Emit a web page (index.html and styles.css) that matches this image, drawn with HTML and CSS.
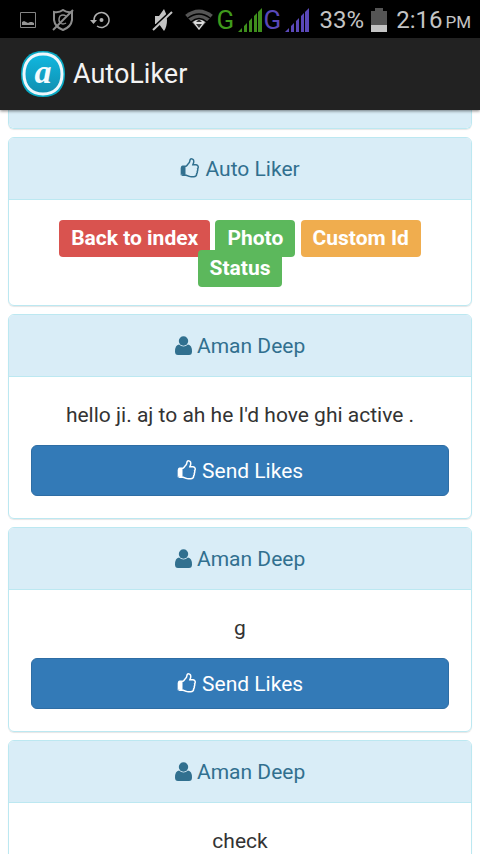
FILE: index.html
```html
<!DOCTYPE html>
<html lang="en">
<head>
<meta charset="utf-8">
<meta name="viewport" content="width=device-width, initial-scale=1">
<title>AutoLiker</title>
<link rel="stylesheet" href="styles.css">
</head>
<body>
<svg class="defs" aria-hidden="true">
  <symbol id="thumb" viewBox="64 0 1664 1792"><path d="M256 1408q0-26-19-45t-45-19-45 19-19 45 19 45 45 19 45-19 19-45zm1280-640q0-51-39-89.500t-89-38.500h-352q0-58 48-159.500t48-160.500q0-98-32-145t-128-47q-26 26-38 85t-30.500 125.500-59.500 109.500q-22 23-77 91-4 5-23 30t-31.500 41-34.500 42.500-40 44-38.500 35.500-40 27-35.500 9h-32v640h32q13 0 31.500 3t33 6.500 38 11 35 11.500 35.500 12.500 29 10.500q211 73 342 73h121q192 0 192-167 0-26-5-56 30-16 47.500-52.500t17.500-73.500-18-69q53-50 53-119 0-25-10-55.500t-25-47.500q32-1 53.500-47t21.500-81zm128-1q0 89-49 163 9 33 9 69 0 77-38 144 3 21 3 43 0 101-60 178 1 139-85 219.500t-227 80.500h-129q-96 0-189.500-22.500t-216.500-65.500q-116-40-138-40h-288q-53 0-90.500-37.500t-37.500-90.500v-640q0-53 37.500-90.500t90.500-37.500h274q36-24 137-155 58-75 107-128 24-25 35.500-85.500t30.500-126.500 62-108q39-37 90-37 84 0 151 32.500t102 101.500 35 186q0 93-48 192h176q104 0 180 76t76 179z"/><path d="M90 800H310V1480H90Z" fill-opacity=".75"/></symbol>
  <symbol id="user" viewBox="0 0 17 21"><circle cx="8.500" cy="6" r="4.700"/><path d="M4 9.500Q8.500 13.500 13 9.500Q17 10 17 16.500Q17 20 14 20H3Q0 20 0 16.500Q0 10 4 9.500Z"/></symbol>
  <symbol id="signal" viewBox="0 0 24 24"><path d="M0 24L4 20V24ZM6 18L9 15V24H6ZM11 13L14 10V24H11ZM16 8L19 5V24H16ZM20 4L24 0V24H20Z"/></symbol>
</svg>
<div class="app">
  <div class="status">
    <div class="notices">
      <svg width="16" height="16" viewBox="0 0 16 16"><path d="M.5.500H15.500V15.500H.5Z" fill="none" stroke="#858585"/><path d="M2 13V10L4 9L6 10L8 11L10 10L12 10L14 11V13Z" fill="#959595"/></svg>
      <svg width="22" height="22" viewBox="0 0 22 22" fill="none" stroke="#8c8c8c" stroke-width="2"><path d="M2 3Q7 4 11 1Q15 4 20 3V11Q19 18 11 21Q3 18 2 11Z"/><path d="M14 7Q11 5 8 7Q6 11 8 14Q11 16 14 14" stroke-width="1.500"/><path d="M1 21L21 1"/></svg>
      <svg width="20" height="18" viewBox="0 0 20 18" fill="none" stroke="#b0b0b0" stroke-width="1.500"><path d="M4 11V9A7.500 7.500 0 1 1 7 15"/><path d="M0 9H7L3.500 13Z" fill="#b0b0b0" stroke="none"/><circle cx="11.500" cy="9" r="2" fill="#b0b0b0" stroke="none"/></svg>
    </div>
    <div class="system">
      <svg class="mute" width="22" height="24" viewBox="0 0 22 24"><path d="M3 8H7L12 1Q15 6 15 12Q15 19 12 23L7 16H3Z" fill="#c4c4c4"/><path d="M0 21L20 2" stroke="#000" stroke-width="2"/><path d="M1 22L20 4" stroke="#c4c4c4" stroke-width="2"/></svg>
      <svg class="wifi" width="28" height="22" viewBox="0 0 28 22" fill="none"><path d="M0 6Q14-5 28 6L14 21Z" fill="#555"/><path d="M3 9Q14 1 25 9M6 13Q14 6 22 13" stroke="#000" stroke-width="1.500"/><path d="M8 13Q14 8 20 13L14 21Z" fill="#ddd"/><path d="M11 13L14 10L17 13ZM11 15H17L14 19Z" fill="#333"/><path d="M0 6L14 22H0ZM28 6L14 22H28Z" fill="#000"/></svg>
      <span class="net green">G</span><svg class="bars green" width="24" height="24"><use href="#signal"/></svg>
      <span class="net violet">G</span><svg class="bars violet" width="24" height="24"><use href="#signal"/></svg>
      <span class="percent">33%</span>
      <svg class="battery" width="16" height="24" viewBox="0 0 16 24"><path d="M4 0H12V3H16V24H0V3H4Z" fill="#555"/><path d="M0 17H16V24H0Z" fill="#c4c4c4"/></svg>
      <span class="time">2:16</span><span class="ampm">PM</span>
    </div>
  </div>
  <header class="bar">
    <svg class="logo" width="46" height="48" viewBox="0 0 46 48">
      <defs><linearGradient id="cyan" x2="0" y2="1"><stop stop-color="#10b8e0"/><stop offset="1" stop-color="#118eaf"/></linearGradient></defs>
      <path d="M23 1C37 1 45 9 45 24S37 47 23 47S1 39 1 24S9 1 23 1Z" fill="#08a9c4"/>
      <path d="M23 4C35 4 42 12 42 24S35 44 23 44S4 36 4 24S11 4 23 4Z" fill="url(#cyan)" stroke="#eef7fc" stroke-width="3"/>
      <text x="23" y="33" text-anchor="middle" class="mark">a</text>
    </svg>
    <h1>AutoLiker</h1>
  </header>
  <main>
    <section class="panel cut"><div class="tail"></div></section>
    <section class="panel">
      <h2><svg class="thumb"><use href="#thumb"/></svg> Auto Liker</h2>
      <nav class="content">
        <a class="label red" href="#index">Back to index</a>
        <a class="label leaf" href="#photo">Photo</a>
        <a class="label amber" href="#custom">Custom Id</a>
        <a class="label leaf" href="#status">Status</a>
      </nav>
    </section>
    <section class="panel">
      <h2><svg class="user"><use href="#user"/></svg> Aman Deep</h2>
      <div class="content">
        <p>hello ji. aj to ah he I'd hove ghi active .</p>
        <button type="button"><svg class="thumb"><use href="#thumb"/></svg> Send Likes</button>
      </div>
    </section>
    <section class="panel">
      <h2><svg class="user"><use href="#user"/></svg> Aman Deep</h2>
      <div class="content">
        <p>g</p>
        <button type="button"><svg class="thumb"><use href="#thumb"/></svg> Send Likes</button>
      </div>
    </section>
    <section class="panel">
      <h2><svg class="user"><use href="#user"/></svg> Aman Deep</h2>
      <div class="content">
        <p>check</p>
      </div>
    </section>
  </main>
</div>
</body>
</html>
```
FILE: styles.css
```css
* { box-sizing: border-box; }
body {
  margin: 0;
  background: #fff;
  color: #333;
  font: 21px/30px Roboto, sans-serif;
}
.defs { display: none; }
.app {
  display: flex;
  flex-direction: column;
  height: 100vh;
}
.status {
  display: flex;
  justify-content: space-between;
  align-items: center;
  flex: none;
  padding: 5px 9px 3px 20px;
  background: #000;
  color: #c4c4c4;
  white-space: nowrap;
}
.status svg { flex: none; }
.notices, .system { display: flex; align-items: center; }
.notices { gap: 16px; }
.mute { margin-right: 11px; }
.wifi { margin-right: 4px; }
.net { width: 21px; font-size: 26px; }
.bars { margin-right: 2px; }
.green { color: #3f9a1c; fill: #3f8f1c; }
.violet { color: #5a48b8; fill: #5a48b8; }
.percent { margin: 0 7px 0 9px; font-size: 24px; }
.time { margin: 0 3px 0 9px; font-size: 24px; }
.ampm { font-size: 17px; line-height: 26px; padding-top: 4px; }
.bar {
  display: flex;
  align-items: center;
  gap: 7px;
  flex: none;
  padding: 12px 20px;
  background: #222;
  box-shadow: 0 1px 3px rgba(0, 0, 0, .5);
  position: relative;
}
.mark {
  fill: #f4fafd;
  font: italic bold 34px "Liberation Serif", serif;
}
h1 {
  margin: 0;
  color: #f3f3f3;
  font-size: 27px;
  font-weight: 400;
}
main {
  flex: 1;
  min-height: 0;
  overflow: hidden;
  padding: 0 8px;
}
.panel {
  margin-bottom: 8px;
  border: 1px solid #bce8f1;
  border-radius: 6px;
  box-shadow: 0 1px 1px rgba(0, 0, 0, .1);
  text-align: center;
  overflow: hidden;
}
.cut { border-top: 0; border-radius: 0 0 6px 6px; }
.tail { height: 18px; background: #d9edf7; }
h2 {
  margin: 0;
  padding: 16px 22px 15px;
  border-bottom: 1px solid #bce8f1;
  background: #d9edf7;
  color: #31708f;
  font-size: 21px;
  font-weight: 400;
}
.content { padding: 23px 22px 22px; }
.label {
  padding: 6px 12px 7px;
  border-radius: 4px;
  color: #fff;
  font-weight: 700;
  text-decoration: none;
  white-space: nowrap;
}
.red { background: #d9534f; }
.leaf { background: #5cb85c; }
.amber { background: #f0ad4e; }
p { margin: 0 0 15px; }
button {
  display: block;
  width: 100%;
  padding: 10px 18px 9px;
  border: 1px solid #2e6da4;
  border-radius: 6px;
  background: #337ab7;
  color: #fff;
  font: inherit;
}
.thumb, .user {
  height: 21px;
  fill: currentColor;
  vertical-align: -3px;
}
.thumb { width: 20px; }
.user { width: 17px; }
```
